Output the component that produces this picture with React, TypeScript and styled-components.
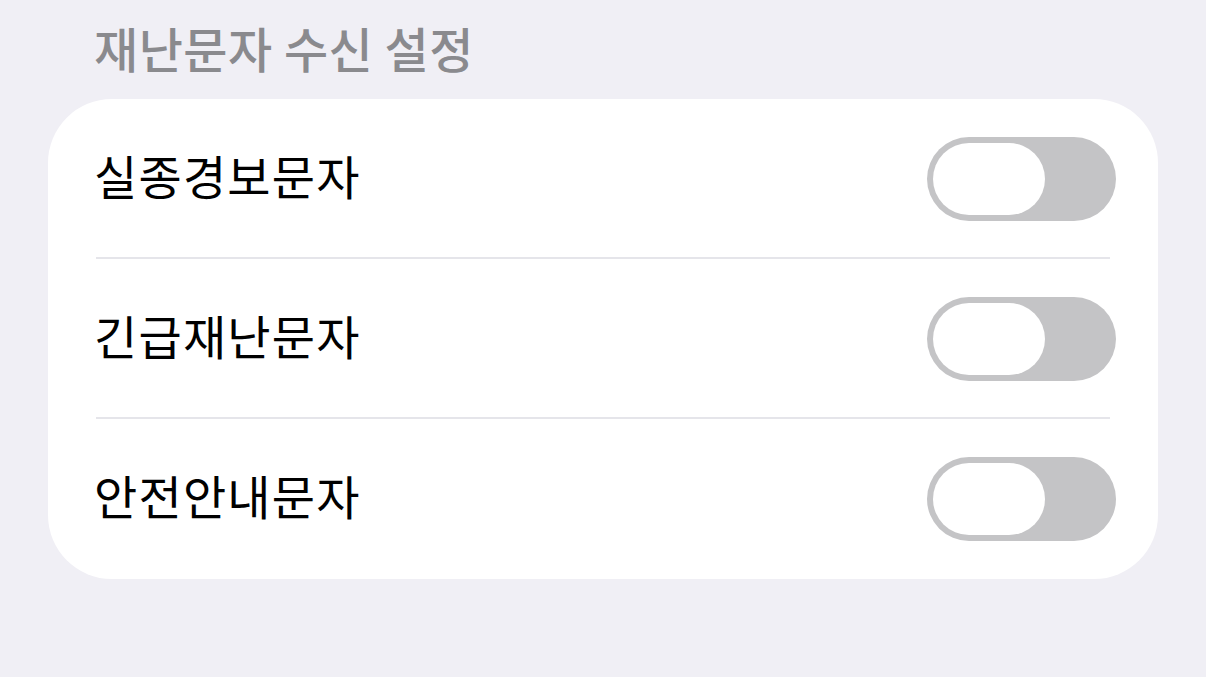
import React from "react";
import styled, { createGlobalStyle } from "styled-components";

const Global = createGlobalStyle`
  html, body { margin: 0; padding: 0; background: #f0eff5; }
  body { font-family: "Noto Sans CJK KR", "Noto Sans", sans-serif; }
`;

const Page = styled.div`
  width: 1206px;
  height: 677px;
  box-sizing: border-box;
  padding: 18px 48px 0 48px;
  display: flex;
  flex-direction: column;
`;

const Title = styled.h2`
  margin: 0 0 0 46px;
  font-size: 48px;
  line-height: 58px;
  font-weight: 500;
  color: #8a8a8e;
  letter-spacing: 0.5px;
`;

const Card = styled.div`
  margin-top: 23px;
  background: #ffffff;
  border-radius: 64px;
  display: flex;
  flex-direction: column;
`;

const Row = styled.div<{ $divider: boolean }>`
  height: 160px;
  box-sizing: border-box;
  display: flex;
  align-items: center;
  justify-content: space-between;
  padding: 0 42px 0 46px;
  position: relative;
  &::after {
    content: "";
    display: ${(p) => (p.$divider ? "block" : "none")};
    position: absolute;
    left: 48px;
    right: 48px;
    bottom: 0;
    height: 2px;
    background: #e5e5ea;
  }
`;

const Label = styled.span`
  font-size: 47px;
  line-height: 56px;
  margin-bottom: 8px;
  color: #000000;
  font-weight: 400;
  letter-spacing: 1.2px;
`;

const Track = styled.div<{ $on: boolean }>`
  width: 189px;
  height: 84px;
  border-radius: 42px;
  background: ${(p) => (p.$on ? "#34c759" : "#c4c4c6")};
  box-sizing: border-box;
  padding: 6px;
  display: flex;
  justify-content: ${(p) => (p.$on ? "flex-end" : "flex-start")};
`;

const Knob = styled.div`
  width: 112px;
  height: 72px;
  border-radius: 36px;
  background: #ffffff;
`;

const items = ["실종경보문자", "긴급재난문자", "안전안내문자"];

export default function App() {
  return (
    <>
      <Global />
      <Page>
        <Title>재난문자 수신 설정</Title>
        <Card>
          {items.map((t, i) => (
            <Row key={t} $divider={i < items.length - 1}>
              <Label>{t}</Label>
              <Track $on={false}>
                <Knob />
              </Track>
            </Row>
          ))}
        </Card>
      </Page>
    </>
  );
}
